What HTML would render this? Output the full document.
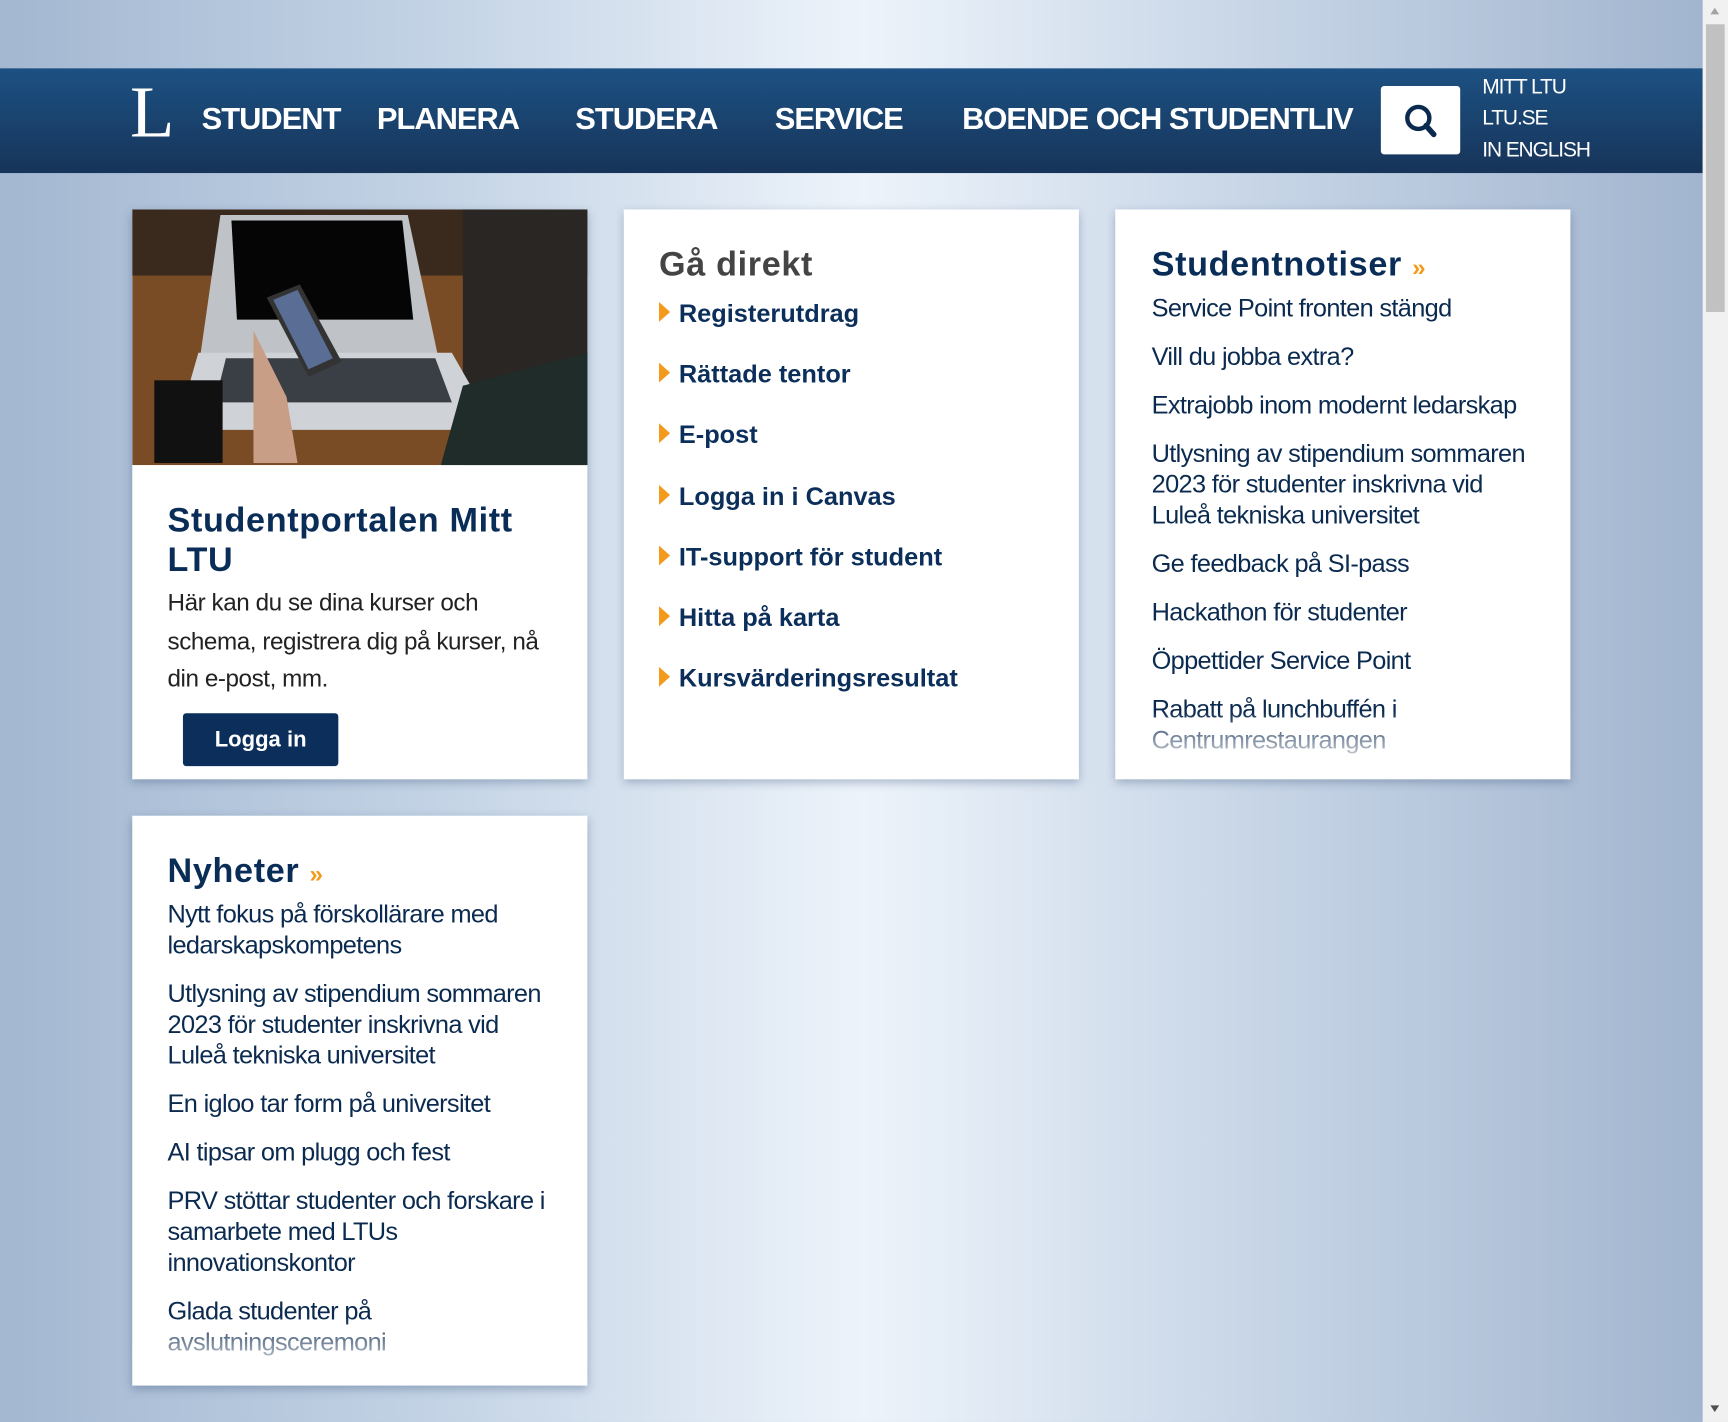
<!DOCTYPE html>
<html><head><meta charset="utf-8"><style>
html,body{margin:0;padding:0;width:1728px;height:1422px;overflow:hidden}
body{background:#a9bdd6}
#w{position:absolute;left:0;top:0;width:1568px;height:1290px;transform:scale(1.10204,1.1023);transform-origin:0 0;font-family:"Liberation Sans",Arial,sans-serif;
background:linear-gradient(90deg,#a3b7d1 0%,#c3d3e5 25%,#edf3fa 50%,#c8d6e7 72%,#a2b5cf 98.5%);}
.nav{position:absolute;left:0;top:62px;width:1545px;height:95px;background:linear-gradient(#1c5183,#173459)}
.logo{position:absolute;left:118px;top:70px;color:#fff;font-family:"Liberation Serif",serif;font-size:66px;line-height:66px}
.ni{position:absolute;top:93px;color:#fff;font-weight:bold;font-size:28px;letter-spacing:-0.9px;line-height:30px}
.sb{position:absolute;left:1253px;top:78px;width:72px;height:62px;background:#fff;border-radius:3px}
.rl{position:absolute;left:1345px;color:#fff;font-size:19px;letter-spacing:-1px;line-height:20px}
.card{position:absolute;background:#fff;box-shadow:0 3px 8px rgba(40,70,110,.35)}
.h{font-weight:bold;font-size:31px;color:#0a2d57;letter-spacing:.6px}
.it{position:absolute;left:598px;font-weight:bold;font-size:23px;color:#0b2f5a;line-height:28px}
.it:before{content:"";position:absolute;left:0;top:4px;border-left:10px solid #f39a1b;border-top:9px solid transparent;border-bottom:9px solid transparent}
.it span{margin-left:18px}
.li{font-size:23px;color:#0b2a4f;line-height:28px;letter-spacing:-.6px;margin-bottom:16px}
.fade{position:absolute;left:0;right:0;height:40px;background:linear-gradient(rgba(255,255,255,0),rgba(255,255,255,.75))}
.scr{position:absolute;left:1545px;top:0;width:23px;height:1290px;background:#f1f1f1}
</style></head><body><div id="w">
<div class="nav"></div>
<div class="logo">L</div>
<div class="ni" style="left:183px">STUDENT</div>
<div class="ni" style="left:342px">PLANERA</div>
<div class="ni" style="left:522px">STUDERA</div>
<div class="ni" style="left:703px">SERVICE</div>
<div class="ni" style="left:873px">BOENDE OCH STUDENTLIV</div>
<div class="sb"><svg width="72" height="62" viewBox="0 0 72 62"><circle cx="34" cy="29" r="10" fill="none" stroke="#0b2a4f" stroke-width="4"/><path d="M41 36l7 8" stroke="#0b2a4f" stroke-width="5" stroke-linecap="round"/></svg></div>
<div class="rl" style="top:70px">MITT LTU</div>
<div class="rl" style="top:98px">LTU.SE</div>
<div class="rl" style="top:127px">IN ENGLISH</div>

<div class="card" style="left:120px;top:190px;width:413px;height:517px">
<svg width="413" height="232" viewBox="0 0 413 232" style="display:block">
<rect width="413" height="232" fill="#7a4c26"/><rect width="413" height="60" fill="#3a2a1e"/>
<rect x="300" y="0" width="113" height="232" fill="#2a2624"/>
<path d="M80 5h170l30 140H60z" fill="#bfc3c8"/><path d="M90 10h155l10 90H95z" fill="#050505"/>
<path d="M60 130h230l40 70H40z" fill="#cfd3d7"/><path d="M85 135h190l15 40H75z" fill="#3a3e45"/>
<path d="M122 80l30-12 38 70-30 14z" fill="#333"/><path d="M128 82l22-9 32 62-22 10z" fill="#5a6d95"/>
<path d="M110 110l30 60 10 60h-40z" fill="#c89e86"/><rect x="20" y="155" width="62" height="75" fill="#111"/>
<path d="M300 160l113-30v102H280z" fill="#1f2c2a"/>
</svg>
<div class="h" style="position:absolute;left:32px;top:264px;line-height:36px;width:360px">Studentportalen Mitt LTU</div>
<div style="position:absolute;left:32px;top:340px;width:360px;font-size:22px;line-height:34.5px;color:#222;letter-spacing:-.4px">Här kan du se dina kurser och schema, registrera dig på kurser, nå din e-post, mm.</div>
<div style="position:absolute;left:46px;top:457px;width:141px;height:48px;background:#0b2f5a;border-radius:3px;color:#fff;font-weight:bold;font-size:20px;line-height:48px;text-align:center">Logga in</div>
</div>

<div class="card" style="left:566px;top:190px;width:413px;height:517px"></div>
<div class="h" style="position:absolute;left:598px;top:222px;color:#444">Gå direkt</div>
<div class="it" style="top:270px"><span>Registerutdrag</span></div>
<div class="it" style="top:325px"><span>Rättade tentor</span></div>
<div class="it" style="top:380px"><span>E-post</span></div>
<div class="it" style="top:436px"><span>Logga in i Canvas</span></div>
<div class="it" style="top:491px"><span>IT-support för student</span></div>
<div class="it" style="top:546px"><span>Hitta på karta</span></div>
<div class="it" style="top:601px"><span>Kursvärderingsresultat</span></div>

<div class="card" style="left:1012px;top:190px;width:413px;height:517px;overflow:hidden">
<div class="h" style="position:absolute;left:33px;top:32px">Studentnotiser <span style="color:#f39a1b;font-size:22px">»</span></div>
<div style="position:absolute;left:33px;top:75px;width:345px">
<div class="li">Service Point fronten stängd</div>
<div class="li">Vill du jobba extra?</div>
<div class="li">Extrajobb inom modernt ledarskap</div>
<div class="li">Utlysning av stipendium sommaren 2023 för studenter inskrivna vid Luleå tekniska universitet</div>
<div class="li">Ge feedback på SI-pass</div>
<div class="li">Hackathon för studenter</div>
<div class="li">Öppettider Service Point</div>
<div class="li">Rabatt på lunchbuffén i Centrumrestaurangen</div>
</div>
<div class="fade" style="top:455px"></div>
</div>

<div class="card" style="left:120px;top:740px;width:413px;height:517px;overflow:hidden">
<div class="h" style="position:absolute;left:32px;top:32px">Nyheter <span style="color:#f39a1b;font-size:22px">»</span></div>
<div style="position:absolute;left:32px;top:75px;width:345px">
<div class="li">Nytt fokus på förskollärare med ledarskapskompetens</div>
<div class="li">Utlysning av stipendium sommaren 2023 för studenter inskrivna vid Luleå tekniska universitet</div>
<div class="li">En igloo tar form på universitet</div>
<div class="li">AI tipsar om plugg och fest</div>
<div class="li">PRV stöttar studenter och forskare i samarbete med LTUs innovationskontor</div>
<div class="li">Glada studenter på avslutningsceremoni</div>
</div>
<div class="fade" style="top:455px"></div>
</div>

<div class="scr"><div style="position:absolute;left:3px;top:22px;width:17px;height:261px;background:#c1c1c1"></div>
<div style="position:absolute;left:7px;top:7px;border-bottom:6px solid #a3a3a3;border-left:4px solid transparent;border-right:4px solid transparent"></div>
<div style="position:absolute;left:7px;top:1275px;border-top:6px solid #505050;border-left:4px solid transparent;border-right:4px solid transparent"></div></div>
</div></body></html>
